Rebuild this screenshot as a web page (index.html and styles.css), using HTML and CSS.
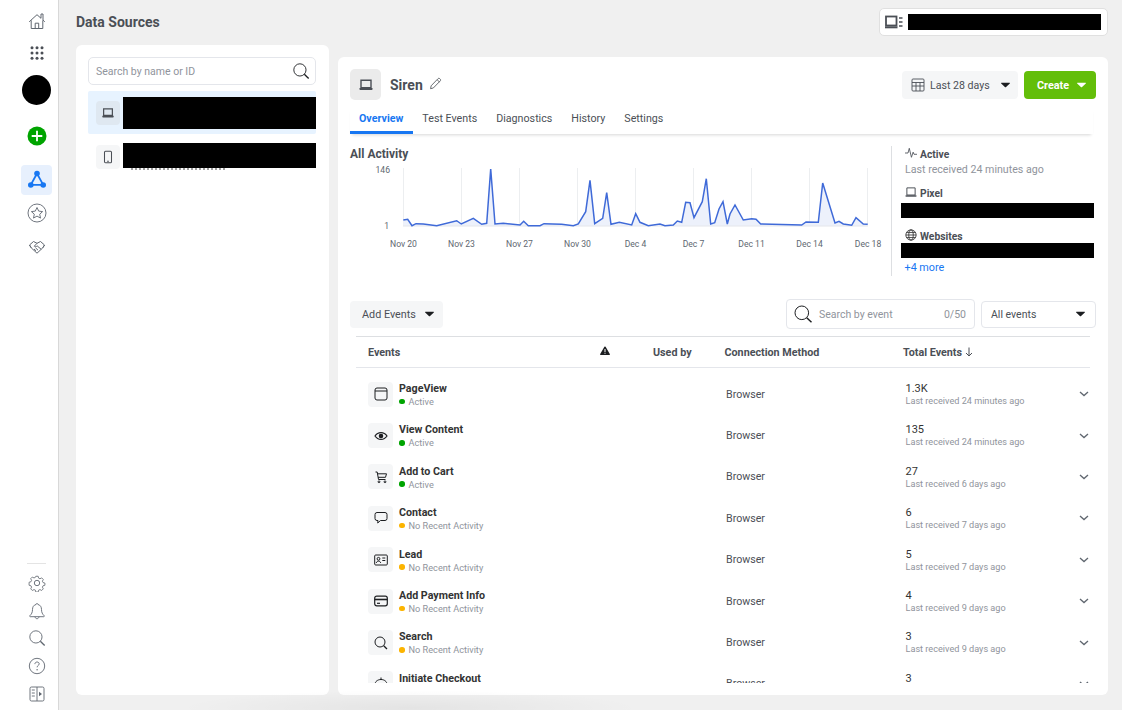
FILE: index.html
```html
<!DOCTYPE html>
<html lang="en">
<head>
<meta charset="utf-8">
<title>Data Sources</title>
<link rel="stylesheet" href="styles.css">
</head>
<body>
<svg class="defs" width="0" height="0" aria-hidden="true">
  <symbol id="laptop" viewBox="0 0 16 16"><path d="M3 3.2h10v7.6H3z" fill="none" stroke="currentColor" stroke-width="1.4"/><path d="M1.5 11h13v1.2a.8.8 0 0 1-.8.8H2.300a.8.8 0 0 1-.8-.8z" fill="currentColor"/></symbol>
  <symbol id="i-search" viewBox="0 0 20 20"><circle cx="8.800" cy="8.800" r="6.800" fill="none" stroke="currentColor" stroke-width="1"/><path d="M13.700 13.700l4.800 4.600" stroke="currentColor" stroke-width="1.500" fill="none"/></symbol>
  <symbol id="caret" viewBox="0 0 10 6"><path d="M.5 .5h9a.4.4 0 0 1 .3.7L5.300 5.400a.5.5 0 0 1-.7 0L.2 1.200A.4.4 0 0 1 .5 .5z" fill="currentColor"/></symbol>
  <symbol id="chev" viewBox="0 0 10 6"><path d="M1 1l4 3.600L9 1" fill="none" stroke="currentColor" stroke-width="1.300"/></symbol>
</svg>

<div class="app">
  <nav class="rail">
    <div class="rail-top">
      <a class="rail-item"><svg class="ic18" viewBox="0 0 18 18" fill="none" stroke="#606770"><path d="M1.200 9.800L9 2.700l4 3.600V2h2v6.100l1.800 1.700M3.200 8.300v8.200h11.600V8.300M7.200 16.500v-5.300h3.500v5.300"/></svg></a>
      <a class="rail-item gap8"><svg class="ic18" viewBox="0 0 18 18" fill="#4b4f56"><circle cx="4" cy="3.800" r="1.500"/><circle cx="9" cy="3.800" r="1.500"/><circle cx="14" cy="3.800" r="1.500"/><circle cx="4" cy="9" r="1.500"/><circle cx="9" cy="9" r="1.500"/><circle cx="14" cy="9" r="1.500"/><circle cx="4" cy="14.200" r="1.500"/><circle cx="9" cy="14.200" r="1.500"/><circle cx="14" cy="14.200" r="1.500"/></svg></a>
      <div class="avatar"></div>
      <a class="plus"><svg viewBox="0 0 20 20" width="20" height="20"><circle cx="10" cy="10" r="9.500" fill="#00a400"/><path d="M10 4.700v10.600M4.700 10h10.600" stroke="#fff" stroke-width="1.800"/></svg></a>
      <a class="rail-active"><svg viewBox="0 0 20 20" width="20" height="20" fill="#1877f2"><path d="M10 3.500L3.800 14.800h12.400z" fill="none" stroke="#1877f2" stroke-width="1.800"/><circle cx="10" cy="3.500" r="2.800"/><circle cx="3.800" cy="15" r="2.800"/><circle cx="16.200" cy="15" r="2.800"/></svg></a>
      <a class="rail-item gap6"><svg class="ic20" viewBox="0 0 20 20" fill="none" stroke="#606770" stroke-width=".9"><circle cx="10" cy="10" r="9"/><path d="M10 4.500l1.700 3.600 3.900.5-2.900 2.600.8 3.900-3.500-2-3.500 2 .8-3.900-2.900-2.600 3.900-.5z"/></svg></a>
      <a class="rail-item gap10"><svg class="ic18" viewBox="0 0 18 18" fill="none" stroke="#606770" stroke-width="1"><path d="M1.500 7L5.500 3.500 9 5.300 12.500 3.500 16.500 7 14.800 9.800 9 15.200 3.200 9.800z"/><path d="M1.500 7l1.700 2.800M16.500 7l-1.700 2.800M9 5.300L6.300 8.200c1 .9 2 .5 2.900-.3l4 3.400M6 11l2 1.800M7.500 9.800l2.500 2.400"/></svg></a>
    </div>
    <div class="rail-bottom">
      <div class="rail-sep"></div>
      <a class="rail-item"><svg class="ic18" viewBox="0 0 18 18" fill="none" stroke="#606770" stroke-width=".9"><circle cx="9" cy="9" r="2.700"/><path d="M7.700 1.500h2.600l.5 2.100 1.500.7 1.900-1 1.800 1.800-1 1.900.7 1.500 2.100.6v2.400l-2.100.6-.7 1.500 1 1.900-1.800 1.800-1.900-1-1.500.7-.5 2.100H7.700l-.5-2.100-1.500-.7-1.900 1-1.800-1.800 1-1.900-.7-1.500-2.100-.6V8.200l2.100-.6.700-1.500-1-1.900 1.800-1.800 1.900 1 1.500-.7z" transform="translate(.9 .9) scale(.9)"/></svg></a>
      <a class="rail-item"><svg class="ic18" viewBox="0 0 18 18" fill="none" stroke="#606770" stroke-width=".9"><path d="M9 1.500c.6 0 1 .5 1 1 2.400.6 3.500 2.500 3.500 5 0 3 1 4.600 2.700 6.300.3.400 0 .9-.4.900H2.200c-.4 0-.7-.5-.4-.9C3.500 12.100 4.500 10.500 4.500 7.500c0-2.500 1.100-4.400 3.500-5 0-.5.400-1 1-1zM7 14.800c.3 1.300 1.100 1.900 2 1.900s1.700-.6 2-1.900"/></svg></a>
      <a class="rail-item rail-search"><svg class="ic18"><use href="#i-search"/></svg></a>
      <a class="rail-item"><svg class="ic18" viewBox="0 0 18 18" fill="none" stroke="#606770" stroke-width=".9"><circle cx="9" cy="9" r="7.700"/><path d="M6.900 7.100c0-1.300 1-2.100 2.200-2.100s2.100.8 2.100 1.900c0 1.600-2.100 1.500-2.100 3.400"/><circle cx="9.100" cy="12.700" r=".7" fill="#606770" stroke="none"/></svg></a>
      <a class="rail-item"><svg class="ic18" viewBox="0 0 18 18" fill="none" stroke="#606770" stroke-width=".9"><rect x="2" y="2" width="14" height="14" rx="1.500"/><path d="M9 2v14M3.800 5h3M3.800 8h3M3.800 11h3"/><path d="M11 6.700l3 2.300-3 2.300z" fill="#606770" stroke="none"/></svg></a>
    </div>
  </nav>

  <main class="content">
    <section class="col-left">
      <h1 class="page-title">Data Sources</h1>
      <div class="card sources">
        <div class="source-search">
          <span class="placeholder">Search by name or ID</span>
          <svg class="ic18 dark"><use href="#i-search"/></svg>
        </div>
        <div class="source selected">
          <span class="source-icon tinted"><svg class="ic14"><use href="#laptop"/></svg></span>
          <div class="redact r-selected"></div>
        </div>
        <div class="source second">
          <span class="source-icon"><svg class="ic14" viewBox="0 0 16 16" fill="none" stroke="currentColor" stroke-width="1.200"><rect x="4" y="1.500" width="8" height="13" rx="1.200"/><path d="M7 12.800h2"/></svg></span>
          <div class="redact-wrap"><div class="redact r-second"></div><div class="residue"></div></div>
        </div>
      </div>
    </section>

    <section class="col-right">
      <div class="account">
        <svg class="account-icon" viewBox="0 0 18 14" fill="none" stroke="#4b4f56"><rect x="1" y="1.500" width="10.500" height="9" stroke-width="1.800"/><path d="M0 11.300h12.500v2H0z" fill="#4b4f56" stroke="none"/><path d="M14 3h3.500M14 7h3.500M14 11h3.500" stroke-width="1.300"/></svg>
        <div class="redact r-account"></div>
      </div>
      <div class="card detail">
        <header class="detail-head">
          <div class="detail-title">
            <span class="title-icon"><svg class="ic16"><use href="#laptop"/></svg></span>
            <h2 class="source-name">Siren</h2>
            <svg class="pencil" viewBox="0 0 14 14" fill="none" stroke="#4b4f56" stroke-width=".9"><path d="M2.300 9.500L9.700 1.800c.6-.6 1.400-.5 2 .1l.4.4c.6.600.6 1.300 0 1.900L4.700 11.800l-3 .8zM8.700 2.900l2.500 2.400"/></svg>
          </div>
          <div class="detail-actions">
            <button class="btn date"><svg class="ic16 cal" viewBox="0 0 16 16" fill="none" stroke="#4b4f56" stroke-width=".9"><rect x="2" y="2" width="12" height="12" rx="1"/><path d="M2 5.500h12M2 9h12M6 5.500V14M10 5.500V14"/></svg>Last 28 days<svg class="caret"><use href="#caret"/></svg></button>
            <button class="btn create">Create<svg class="caret"><use href="#caret"/></svg></button>
          </div>
        </header>
        <nav class="tabs">
          <a class="tab active">Overview</a>
          <a class="tab">Test Events</a>
          <a class="tab">Diagnostics</a>
          <a class="tab">History</a>
          <a class="tab">Settings</a>
        </nav>

        <div class="overview">
          <div class="activity">
            <h3 class="activity-title">All Activity</h3>
            <svg class="chart" viewBox="350 160 540 100" width="540" height="100">
              <g class="grid-lines">
                <path d="M403.500 168V226M461.500 168V226M519.500 168V226M577.500 168V226M635.500 168V226M693.500 168V226M751.500 168V226M809.500 168V226M867.500 168V226"/>
              </g>
              <path class="area" d="M403.300 226V220L407.700 219.300 412 225.700 416 223.700 423.300 224 436.700 225.700 456.700 220.700 461.300 224 473.300 218.300 481.700 224.300 486.700 223.300 490.700 169 495 224 503.300 223.300 520 225 523.700 221.300 528.300 225.700 540 225.700 544 223.700 561.700 224.300 573.300 225.700 578.300 224 585.700 211.700 590 180.300 594.700 223.700 602.700 218.300 606.700 192.700 611 224.300 619.300 222.300 631.700 225 635.700 213.700 640 222.300 648.300 225.700 660 224 665 225.700 673.300 225 677.300 221 681.700 222.300 685.700 202.300 690 202.700 694 217.700 702.300 201.700 706.300 178.700 710.700 224 714.700 222.700 719 209 723 201.700 727.300 224 730 214 735 205 743.300 220 751.700 218.700 756 219.300 760.700 224 801.700 225 806 222 818.300 222.300 822.700 183 835 223 839 221.300 843.300 224 851.700 225.300 856 217.700 863.300 224 867.700 224.300V226Z"/>
              <path class="baseline" d="M403 226H868"/>
              <path class="line" d="M403.300 220L407.700 219.300 412 225.700 416 223.700 423.300 224 436.700 225.700 456.700 220.700 461.300 224 473.300 218.300 481.700 224.300 486.700 223.300 490.700 169 495 224 503.300 223.300 520 225 523.700 221.300 528.300 225.700 540 225.700 544 223.700 561.700 224.300 573.300 225.700 578.300 224 585.700 211.700 590 180.300 594.700 223.700 602.700 218.300 606.700 192.700 611 224.300 619.300 222.300 631.700 225 635.700 213.700 640 222.300 648.300 225.700 660 224 665 225.700 673.300 225 677.300 221 681.700 222.300 685.700 202.300 690 202.700 694 217.700 702.300 201.700 706.300 178.700 710.700 224 714.700 222.700 719 209 723 201.700 727.300 224 730 214 735 205 743.300 220 751.700 218.700 756 219.300 760.700 224 801.700 225 806 222 818.300 222.300 822.700 183 835 223 839 221.300 843.300 224 851.700 225.300 856 217.700 863.300 224 867.700 224.300"/>
              <g class="axis">
                <text x="390" y="172.500" text-anchor="end">146</text>
                <text x="389" y="229" text-anchor="end">1</text>
                <text x="403.500" y="247" text-anchor="middle">Nov 20</text>
                <text x="461.500" y="247" text-anchor="middle">Nov 23</text>
                <text x="519.500" y="247" text-anchor="middle">Nov 27</text>
                <text x="577.500" y="247" text-anchor="middle">Nov 30</text>
                <text x="635.500" y="247" text-anchor="middle">Dec 4</text>
                <text x="693.500" y="247" text-anchor="middle">Dec 7</text>
                <text x="751.500" y="247" text-anchor="middle">Dec 11</text>
                <text x="809.500" y="247" text-anchor="middle">Dec 14</text>
                <text x="868" y="247" text-anchor="middle">Dec 18</text>
              </g>
            </svg>
          </div>
          <aside class="summary">
            <div class="sum-head sh-active"><svg class="ic12" viewBox="0 0 14 14" fill="none" stroke="#4b4f56"><path d="M0 7h3.500l1.500-5.500 2.500 10.500L9.500 6l1 2.500H14"/></svg>Active</div>
            <div class="sum-sub">Last received 24 minutes ago</div>
            <div class="sum-head sh-pixel"><svg class="ic12" viewBox="0 0 16 16"><path d="M2.500 2.500h11v9.500h-11z" fill="none" stroke="#4b4f56" stroke-width="1.300"/><path d="M.8 12.300h14.400v2H.8z" fill="#4b4f56"/></svg>Pixel</div>
            <div class="redact r-sum"></div>
            <div class="sum-head sh-web"><svg class="ic12" viewBox="0 0 14 14" fill="none" stroke="#333" stroke-width="1"><circle cx="7" cy="7" r="6"/><ellipse cx="7" cy="7" rx="2.600" ry="6"/><path d="M1 7h12M1.800 4h10.400M1.800 10h10.400"/></svg>Websites</div>
            <div class="redact r-sum"></div>
            <a class="more">+4 more</a>
          </aside>
        </div>

        <div class="toolbar">
          <button class="btn add">Add Events<svg class="caret"><use href="#caret"/></svg></button>
          <div class="event-search">
            <svg class="ic20 dark"><use href="#i-search"/></svg>
            <span class="placeholder">Search by event</span>
            <span class="count">0/50</span>
          </div>
          <div class="select">All events<svg class="caret"><use href="#caret"/></svg></div>
        </div>

        <div class="table">
          <div class="thead">
            <span>Events</span>
            <svg class="warn" viewBox="0 0 10 10"><path d="M5 .5a.7.7 0 0 1 .6.3l4.200 7.300a.6.6 0 0 1-.5.9H.7a.6.6 0 0 1-.5-.9L4.400 .8A.7.7 0 0 1 5 .5z" fill="#1c1e21"/><path d="M4.500 3h1v3h-1zM4.500 6.800h1v1h-1z" fill="#fff"/></svg>
            <span>Used by</span>
            <span>Connection Method</span>
            <span class="sorted">Total Events<svg class="arrow" viewBox="0 0 8 10" fill="none" stroke="#4b4f56"><path d="M4 .5v8.500M1 6l3 3 3-3"/></svg></span>
          </div>
          <div class="tbody">
            <div class="row">
              <span class="ev-icon"><svg class="ic16" viewBox="0 0 16 16" fill="none" stroke="#1c1e21"><rect x="2" y="2" width="12" height="12" rx="2"/><path d="M2 5h12"/></svg></span>
              <div class="ev"><div class="ev-name">PageView</div><div class="ev-status"><i class="dot green"></i>Active</div></div>
              <div class="method">Browser</div>
              <div class="total"><div class="num">1.3K</div><div class="last">Last received 24 minutes ago</div></div>
              <svg class="chev"><use href="#chev"/></svg>
            </div>
            <div class="row">
              <span class="ev-icon"><svg class="ic16" viewBox="0 0 16 16" fill="none" stroke="#1c1e21" stroke-width="1.200"><path d="M2 8c1.500-2.300 3.600-3.400 6-3.400S12.500 5.700 14 8c-1.500 2.300-3.600 3.400-6 3.400S3.500 10.300 2 8z"/><circle cx="8" cy="8" r="1.700" fill="#1c1e21"/></svg></span>
              <div class="ev"><div class="ev-name">View Content</div><div class="ev-status"><i class="dot green"></i>Active</div></div>
              <div class="method">Browser</div>
              <div class="total"><div class="num">135</div><div class="last">Last received 24 minutes ago</div></div>
              <svg class="chev"><use href="#chev"/></svg>
            </div>
            <div class="row">
              <span class="ev-icon"><svg class="ic16" viewBox="0 0 16 16" fill="none" stroke="#1c1e21"><path d="M2.500 3h1.700l1.300 7.500h7M4.500 4.800h9l-1 3.500H5"/><circle cx="6" cy="12.800" r=".9"/><circle cx="12" cy="12.800" r=".9"/></svg></span>
              <div class="ev"><div class="ev-name">Add to Cart</div><div class="ev-status"><i class="dot green"></i>Active</div></div>
              <div class="method">Browser</div>
              <div class="total"><div class="num">27</div><div class="last">Last received 6 days ago</div></div>
              <svg class="chev"><use href="#chev"/></svg>
            </div>
            <div class="row">
              <span class="ev-icon"><svg class="ic16" viewBox="0 0 16 16" fill="none" stroke="#1c1e21"><path d="M4 2.500h8a2 2 0 0 1 2 2v4a2 2 0 0 1-2 2H7.500l-2.800 2.500.3-2.500H4a2 2 0 0 1-2-2v-4a2 2 0 0 1 2-2z"/></svg></span>
              <div class="ev"><div class="ev-name">Contact</div><div class="ev-status"><i class="dot amber"></i>No Recent Activity</div></div>
              <div class="method">Browser</div>
              <div class="total"><div class="num">6</div><div class="last">Last received 7 days ago</div></div>
              <svg class="chev"><use href="#chev"/></svg>
            </div>
            <div class="row">
              <span class="ev-icon"><svg class="ic16" viewBox="0 0 16 16" fill="none" stroke="#1c1e21"><rect x="1.700" y="3" width="12.600" height="10" rx="1"/><circle cx="5.500" cy="6.800" r="1.400"/><path d="M3.300 11c.3-1.300 1.200-1.900 2.200-1.900s1.900.6 2.200 1.900M9.300 6h3M9.300 8.500h3"/></svg></span>
              <div class="ev"><div class="ev-name">Lead</div><div class="ev-status"><i class="dot amber"></i>No Recent Activity</div></div>
              <div class="method">Browser</div>
              <div class="total"><div class="num">5</div><div class="last">Last received 7 days ago</div></div>
              <svg class="chev"><use href="#chev"/></svg>
            </div>
            <div class="row">
              <span class="ev-icon"><svg class="ic16" viewBox="0 0 16 16" fill="none" stroke="#1c1e21" stroke-width="1.200"><rect x="1.700" y="3.200" width="12.600" height="9.600" rx="2"/><path d="M1.700 6.500h12.600" stroke-width="1.600"/><path d="M4 10.300h3"/></svg></span>
              <div class="ev"><div class="ev-name">Add Payment Info</div><div class="ev-status"><i class="dot amber"></i>No Recent Activity</div></div>
              <div class="method">Browser</div>
              <div class="total"><div class="num">4</div><div class="last">Last received 9 days ago</div></div>
              <svg class="chev"><use href="#chev"/></svg>
            </div>
            <div class="row">
              <span class="ev-icon"><svg class="ic16" viewBox="0 0 16 16" fill="none" stroke="#1c1e21"><circle cx="7" cy="7" r="5"/><path d="M10.700 10.700l3.300 3.300" stroke-width="1.300"/></svg></span>
              <div class="ev"><div class="ev-name">Search</div><div class="ev-status"><i class="dot amber"></i>No Recent Activity</div></div>
              <div class="method">Browser</div>
              <div class="total"><div class="num">3</div><div class="last">Last received 9 days ago</div></div>
              <svg class="chev"><use href="#chev"/></svg>
            </div>
            <div class="row">
              <span class="ev-icon"><svg class="ic16" viewBox="0 0 16 16" fill="none" stroke="#1c1e21"><path d="M2 8.500c0-3 2.700-5 6-5s6 2 6 5zM8 1.500v2M1.500 8.500h13M4 11h8"/></svg></span>
              <div class="ev"><div class="ev-name">Initiate Checkout</div><div class="ev-status"><i class="dot amber"></i>No Recent Activity</div></div>
              <div class="method">Browser</div>
              <div class="total"><div class="num">3</div><div class="last">Last received 9 days ago</div></div>
              <svg class="chev"><use href="#chev"/></svg>
            </div>
          </div>
        </div>
      </div>
    </section>
  </main>
</div>
</body>
</html>
```

FILE: styles.css
```css
* { box-sizing: border-box; }
html, body { margin: 0; height: 100%; overflow: hidden; }
body {
  font-family: Roboto, "Liberation Sans", sans-serif;
  color: #4b4f56;
  background: #f0f0f0;
  position: relative;
}
body::after {
  content: "";
  position: absolute;
  left: 180px;
  bottom: -16px;
  width: 460px;
  height: 36px;
  background: radial-gradient(closest-side, rgba(0,0,0,.05), rgba(0,0,0,0));
  pointer-events: none;
}
.defs { position: absolute; }
.app { display: flex; height: 710px; }

.rail {
  width: 59px;
  flex: none;
  background: #fff;
  border-right: 1px solid #d8d8d8;
  display: flex;
  flex-direction: column;
  justify-content: space-between;
  align-items: center;
  padding: 9px 0 4.500px 15px;
  color: #606770;
}
.rail-top, .rail-bottom { display: flex; flex-direction: column; align-items: center; }
.rail-bottom { gap: 3.600px; }
.rail-item { width: 30px; height: 24px; display: flex; align-items: center; justify-content: center; }
.gap8 { margin-top: 8px; }
.gap6 { margin-top: 6px; }
.gap10 { margin-top: 10px; }
.avatar { width: 29px; height: 30px; margin-top: 10px; border-radius: 50%; background: #000; }
.plus { display: block; height: 20px; margin-top: 20.500px; }
.rail-active {
  width: 31px; height: 30px; margin-top: 19.500px;
  background: #e7f0fd; border-radius: 4px;
  display: flex; align-items: center; justify-content: center;
}
.rail-sep { width: 19px; height: 1px; background: #e4e4e4; margin-bottom: 4px; }
.rail-search { color: #606770; }

.ic12 { width: 12px; height: 12px; flex: none; }
.ic14 { width: 14px; height: 14px; flex: none; }
.ic16 { width: 16px; height: 16px; flex: none; }
.ic18 { width: 18px; height: 18px; flex: none; }
.ic20 { width: 20px; height: 20px; flex: none; }
.dark { color: #1c1e21; }

.content { flex: 1; display: flex; gap: 9px; padding: 0 14px 15px 17px; min-width: 0; }
.col-left { width: 253px; display: flex; flex-direction: column; flex: none; }
.col-right { width: 770px; display: flex; flex-direction: column; flex: none; }
.page-title { margin: 0; height: 45px; line-height: 44px; font-size: 14px; font-weight: 700; color: #4b4f56; }
.card { flex: 1; min-height: 0; background: #fff; border-radius: 6px; }

.sources { padding: 12px 13px 12px 12px; }
.source-search {
  height: 28px; border: 1px solid #e4e6eb; border-radius: 5px;
  display: flex; align-items: center; justify-content: space-between;
  padding: 0 5px 0 7px;
}
.placeholder { font-size: 10.500px; color: #90949c; }
.source { display: flex; align-items: center; }
.selected { height: 43px; margin-top: 6px; padding-left: 8px; background: #e7f3ff; border-radius: 2px; }
.second { margin-top: 9px; padding-left: 8px; align-items: flex-start; }
.source-icon {
  width: 24px; height: 24px; margin-right: 3px; flex: none;
  border-radius: 4px; background: #f5f6f7; color: #4b4f56;
  display: flex; align-items: center; justify-content: center;
}
.second .source-icon { margin-top: 2px; }
.tinted { background: #dfe8f1; }
.redact { background: #000; }
.r-selected { flex: 1; height: 32px; }
.redact-wrap { flex: 1; }
.r-second { height: 25px; }
.residue { width: 94px; margin: 0 0 0 8px; border-top: 2px dotted #a0a0a0; }

.account {
  width: 229px; height: 28px; margin: 8px 0 21px auto;
  background: #fff; border: 1px solid #e0e0e0; border-radius: 5px;
  display: flex; align-items: center; padding: 0 6px 0 5px;
}
.account-icon { width: 18px; height: 14px; flex: none; margin-right: 5px; }
.r-account { flex: 1; height: 16px; }

.detail { display: flex; flex-direction: column; padding: 12px 12px 12px; }
.detail-head { display: flex; justify-content: space-between; align-items: flex-start; height: 32px; flex: none; }
.detail-title { display: flex; align-items: center; height: 31px; }
.title-icon {
  width: 31px; height: 31px; border-radius: 5px; background: #ebebeb; color: #4b4f56;
  display: flex; align-items: center; justify-content: center;
}
.source-name { margin: 0 0 0 9px; font-size: 14px; font-weight: 700; color: #4b4f56; }
.pencil { width: 13px; height: 13px; margin-left: 6px; margin-top: -2px; }
.detail-actions { display: flex; gap: 6px; padding-top: 2px; }
.btn {
  font-family: inherit; border: 0; border-radius: 4px; height: 28px;
  font-size: 10.800px; display: flex; align-items: center; padding: 0;
}
.caret { width: 9px; height: 6px; flex: none; }
.date { width: 116px; background: #f5f6f7; color: #4b4f56; padding-left: 8px; font-size: 10.600px; }
.date .cal { margin-right: 4px; }
.date .caret { margin-left: 11px; color: #1c1e21; }
.create {
  width: 72px; background: #63be09; color: #fff; font-weight: 700; padding-left: 13px;
}
.create .caret { margin-left: 8px; color: #fff; }

.tabs {
  display: flex; flex: none; height: 27px; margin-top: 6px;
  margin-right: 3px;
  box-shadow: 0 3px 3px -2px rgba(0,0,0,.16);
}
.tab { font-size: 10.700px; padding: 0 9.500px; line-height: 24px; color: #4b4f56; white-space: nowrap; }
.tab.active {
  color: #1877f2; font-weight: 700; padding: 0 9.500px 0 9px;
  border-bottom: 3px solid #1877f2; height: 27px;
}

.overview { display: flex; flex: none; height: 155px; margin-top: 12px; }
.activity { width: 542px; flex: none; border-right: 1px solid #dddfe2; height: 130px; }
.activity-title { margin: 0; font-size: 12px; font-weight: 700; line-height: 14px; color: #4b4f56; padding-top: 1px; }
.chart { display: block; margin-top: -1px; }
.grid-lines path { stroke: #eceef0; stroke-width: 1; fill: none; }
.baseline { stroke: #e4e6eb; fill: none; }
.area { fill: #edf1fb; stroke: none; }
.line { fill: none; stroke: #3f6ad8; stroke-width: 1.500; }
.axis text { font-family: Roboto, "Liberation Sans", sans-serif; font-size: 8.600px; fill: #606770; }

.summary { flex: 1; padding-left: 9px; font-size: 10.800px; }
.sum-head { display: flex; align-items: center; gap: 3px; font-weight: 700; font-size: 10.300px; color: #4b4f56; padding-left: 4px; height: 14px; }
.sum-head .ic12 { margin-top: -2px; }
.sh-active { margin-top: 1px; }
.sum-sub { padding-left: 4px; font-size: 10.650px; color: #90949c; line-height: 14px; margin-top: 2px; }
.sh-pixel { margin-top: 9px; }
.sh-web { margin-top: 11px; }
.r-sum { height: 15px; margin-top: 3px; width: 193px; }
.sh-web + .r-sum { margin-top: 0; }
.more { display: block; padding-left: 3.500px; margin-top: 3px; font-size: 10.800px; line-height: 14px; color: #1877f2; }

.toolbar { display: flex; flex: none; align-items: center; height: 30px; margin-top: -2px; }
.add { width: 93px; height: 27px; background: #f5f6f7; color: #4b4f56; padding-left: 12px; }
.add .caret { margin-left: 9px; color: #1c1e21; }
.event-search {
  margin-left: 343px; width: 189px; height: 30px;
  border: 1px solid #e4e6eb; border-radius: 4px;
  display: flex; align-items: center; padding: 0 8px 0 6px;
}
.event-search .placeholder { margin-left: 6px; flex: 1; }
.count { font-size: 10.500px; color: #90949c; }
.select {
  margin-left: 6px; width: 115px; height: 27px;
  border: 1px solid #e4e6eb; border-radius: 4px;
  display: flex; align-items: center; justify-content: space-between;
  padding: 0 10px 0 9px; font-size: 10.500px; color: #4b4f56;
}
.select .caret { color: #1c1e21; }

.table { margin: 7px 6px 0; flex: 1; min-height: 0; width: 734px; display: flex; flex-direction: column; }
.thead {
  height: 32px; flex: none;
  border-top: 1px solid #dddfe2; border-bottom: 1px solid #e4e6eb;
  display: grid; grid-template-columns: 232px 53px 71.500px 178.500px 1fr;
  align-items: center; padding-left: 12px;
  font-size: 10.750px; font-weight: 700; color: #4b4f56;
}
.warn { width: 10px; height: 10px; margin-top: -3px; }
.sorted { display: flex; align-items: center; gap: 3px; }
.arrow { width: 8px; height: 10px; }
.tbody { flex: 1; min-height: 0; overflow: hidden; padding-top: 5.500px; }
.row {
  height: 41.400px; display: grid; align-items: center; padding-left: 12px;
  grid-template-columns: 31px 327px 179.500px 1fr 16px;
}
.ev-icon {
  width: 25px; height: 25px; background: #f5f6f7; border-radius: 4px;
  display: flex; align-items: center; justify-content: center;
}
.ev, .total { padding-top: 1.500px; }
.ev-name { font-size: 10.700px; font-weight: 700; line-height: 13px; color: #333; }
.ev-status { display: flex; align-items: center; font-size: 9.200px; line-height: 13px; color: #90949c; }
.dot { width: 5.500px; height: 5.500px; border-radius: 50%; margin-right: 4px; flex: none; }
.green { background: #00a400; }
.amber { background: #fcb400; }
.method { font-size: 10.650px; color: #4b4f56; }
.num { font-size: 11px; line-height: 13px; color: #333; }
.last { font-size: 9.150px; line-height: 13px; color: #90949c; }
.chev { width: 10px; height: 6px; margin-left: 5px; color: #606770; }
```
